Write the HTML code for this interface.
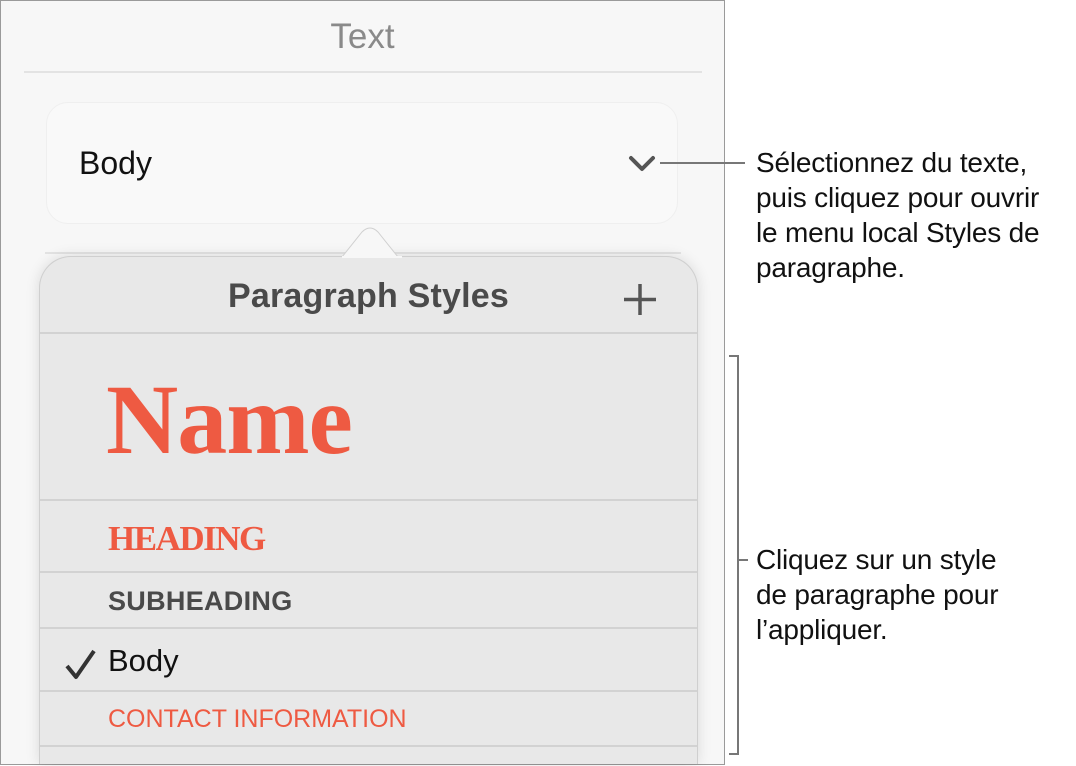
<!DOCTYPE html>
<html><head><meta charset="utf-8"><style>
*{margin:0;padding:0;box-sizing:border-box}
html,body{width:1076px;height:766px;overflow:hidden}
body{background:#fff;position:relative;font-family:"Liberation Sans",sans-serif}
.a{position:absolute}
.panel{left:0;top:0;width:725px;height:765px;background:#f7f7f7;border:1px solid #9a9a9a;overflow:hidden}
.sep{background:#e3e3e3;height:2px}
.pop{left:39px;top:256px;width:659px;height:508px;background:#e8e8e8;border:1px solid #cfcfcf;border-bottom:none;border-radius:32px 32px 0 0;box-shadow:0 0 14px rgba(0,0,0,.12);overflow:hidden}
.row{position:absolute;left:0;width:657px;border-top:2px solid #d2d2d2}
.t{font-size:28px;color:#111;line-height:35px;letter-spacing:-0.2px}
</style></head><body>
<div class="a panel"></div>
<div class="a" style="left:0;width:725px;top:17px;text-align:center;font-size:35px;color:#8a8a8a">Text</div>
<div class="a sep" style="left:24px;top:71px;width:678px"></div>
<div class="a" style="left:46px;top:102px;width:632px;height:122px;border:1px solid #efefef;border-radius:22px;background:#f9f9f9"></div>
<div class="a" style="left:79px;top:145px;font-size:32px;color:#111">Body</div>
<svg class="a" style="left:628px;top:154px" width="32" height="20"><path d="M3 4 L14 15 L25 4" fill="none" stroke="#555" stroke-width="4" stroke-linecap="round" stroke-linejoin="round"/></svg>
<div class="a" style="left:660px;top:162px;width:85px;height:2px;background:#777"></div>
<div class="a sep" style="left:45px;top:252px;width:636px"></div>
<div class="a pop">
 <div class="a" style="left:0;width:657px;top:20px;text-align:center;font-size:34px;font-weight:bold;color:#4a4a4a;letter-spacing:0.2px">Paragraph Styles</div>
 <svg class="a" style="left:582px;top:25px" width="36" height="36"><path d="M18 2V33M2 17.5H34" stroke="#555" stroke-width="3.5"/></svg>
 <div class="row" style="top:75px;height:168px"><div class="a" style="left:66px;top:28px;font-family:'Liberation Serif',serif;font-weight:bold;font-size:100px;color:#ee5a42;letter-spacing:-1px">Name</div></div>
 <div class="row" style="top:242px;height:73px"><div class="a" style="left:68px;top:18px;font-family:'Liberation Serif',serif;font-weight:bold;font-size:35px;color:#ee5a42;letter-spacing:-1.5px">HEADING</div></div>
 <div class="row" style="top:314px;height:57px"><div class="a" style="left:68px;top:13px;font-size:27px;color:#4a4a4a;font-weight:bold;letter-spacing:0.3px">SUBHEADING</div></div>
 <div class="row" style="top:370px;height:64px"><svg class="a" style="left:24px;top:20px" width="34" height="32"><path d="M3 17 L12 28 L30 2" fill="none" stroke="#333" stroke-width="4" stroke-linejoin="round"/></svg><div class="a" style="left:68px;top:14px;font-size:31px;color:#111">Body</div></div>
 <div class="row" style="top:433px;height:56px"><div class="a" style="left:68px;top:13px;font-size:25px;color:#ee5a42">CONTACT INFORMATION</div></div>
 <div class="row" style="top:488px;height:40px"></div>
</div>
<svg class="a" style="left:342px;top:226px" width="60" height="32"><path d="M0 31 L20 6 Q28 -2 36 6 L56 31" fill="#f7f7f7" stroke="#d0d0d0" stroke-width="1"/><rect x="0" y="30" width="60" height="3" fill="#f7f7f7"/></svg>
<div class="a t" style="left:756px;top:145px;width:320px">Sélectionnez du texte,<br>puis cliquez pour ouvrir<br>le menu local Styles de<br>paragraphe.</div>
<div class="a" style="left:729px;top:355px;width:10px;height:400px;border:2px solid #777;border-left:none"></div>
<div class="a" style="left:738px;top:559px;width:10px;height:2px;background:#777"></div>
<div class="a t" style="left:756px;top:542px;width:320px">Cliquez sur un style<br>de paragraphe pour<br>l’appliquer.</div>
</body></html>
